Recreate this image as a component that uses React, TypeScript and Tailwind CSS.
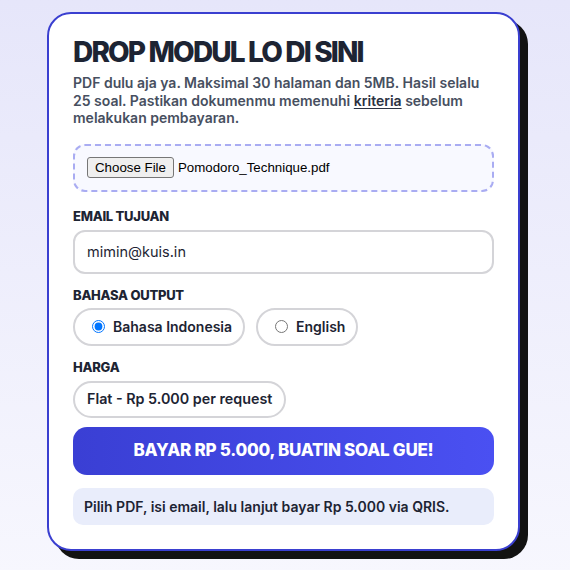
import React from "react";

export default function App() {
  return (
    <div
      className="min-h-[570px] w-full bg-linear-to-b from-[#e6e6fa] to-[#f7f7fe] pt-3 pb-6"
      style={{ fontFamily: "Inter, 'Noto Sans', sans-serif" }}
    >
      <div className="ml-[47px] w-[473px] rounded-[24px] border-2 border-[#3a3fd0] bg-white px-6 pt-[21px] pb-[24px] shadow-[8px_8px_0_#121212]">
        <h1 className="text-[28px] leading-[34px] font-extrabold tracking-[-0.066em] text-[#1d2433]">
          DROP MODUL LO DI SINI
        </h1>
        <p className="mt-[5px] text-[14px] leading-[17.5px] font-semibold text-[#474f60]">
          PDF dulu aja ya. Maksimal 30 halaman dan 5MB. Hasil selalu 25 soal. Pastikan dokumenmu memenuhi{" "}
          <a href="#" className="text-[#2b3242] underline underline-offset-2">
            kriteria
          </a>{" "}
          sebelum melakukan pembayaran.
        </p>

        <div className="mt-[17px] flex h-[48px] items-center rounded-[12px] border-2 border-dashed border-[#a9acf2] bg-[#f8f9ff] px-3">
          <div className="flex items-center" style={{ fontFamily: "'Liberation Sans', Arial, sans-serif" }}>
            <span className="flex h-[21px] items-center rounded-[3px] border border-[#767676] bg-[#efefef] px-[7px] text-[13.3px] text-black">
              Choose File
            </span>
            <span className="ml-[4px] text-[13.3px] text-black">Pomodoro_Technique.pdf</span>
          </div>
        </div>

        <label className="mt-[16px] block text-[13px] leading-[16px] font-extrabold tracking-[-0.02em] text-[#1d2433]">
          EMAIL TUJUAN
        </label>
        <div className="mt-[6px] flex h-[44px] items-center rounded-[12px] border-2 border-[#d4d4d8] px-3 text-[14.5px] text-[#1d2433]">
          mimin@kuis.in
        </div>

        <label className="mt-[13px] block text-[13px] leading-[16px] font-extrabold tracking-[-0.02em] text-[#1d2433]">
          BAHASA OUTPUT
        </label>
        <div className="mt-[5px] flex gap-[11px]">
          <label className="flex h-[38px] w-[172px] items-center gap-[8px] rounded-full border-2 border-[#d4d4d8] pl-[17px] text-[14px] font-semibold text-[#1d2433]">
            <input type="radio" name="lang" defaultChecked className="m-0 h-[13px] w-[13px]" />
            Bahasa Indonesia
          </label>
          <label className="flex h-[38px] w-[102px] items-center gap-[8px] rounded-full border-2 border-[#d4d4d8] pl-[17px] text-[14px] font-semibold text-[#1d2433]">
            <input type="radio" name="lang" className="m-0 h-[13px] w-[13px]" />
            English
          </label>
        </div>

        <label className="mt-[13px] block text-[13px] leading-[16px] font-extrabold tracking-[-0.02em] text-[#1d2433]">
          HARGA
        </label>
        <div className="mt-[6px] flex">
          <div className="flex h-[37px] items-center whitespace-nowrap rounded-full border-2 border-[#d4d4d8] px-[12px] text-[14.3px] font-semibold text-[#1d2433]">
            Flat - Rp 5.000 per request
          </div>
        </div>

        <button className="mt-[9px] flex h-[48px] w-full items-center justify-center rounded-[14px] bg-linear-to-r from-[#3a3fd4] to-[#4a50f2] text-[17px] font-extrabold tracking-[-0.015em] text-white">
          BAYAR RP 5.000, BUATIN SOAL GUE!
        </button>

        <div className="mt-[13px] flex h-[37px] items-center rounded-[10px] bg-[#e9edfb] px-[11px] text-[14px] font-semibold text-[#1d2433]">
          Pilih PDF, isi email, lalu lanjut bayar Rp 5.000 via QRIS.
        </div>
      </div>
    </div>
  );
}
